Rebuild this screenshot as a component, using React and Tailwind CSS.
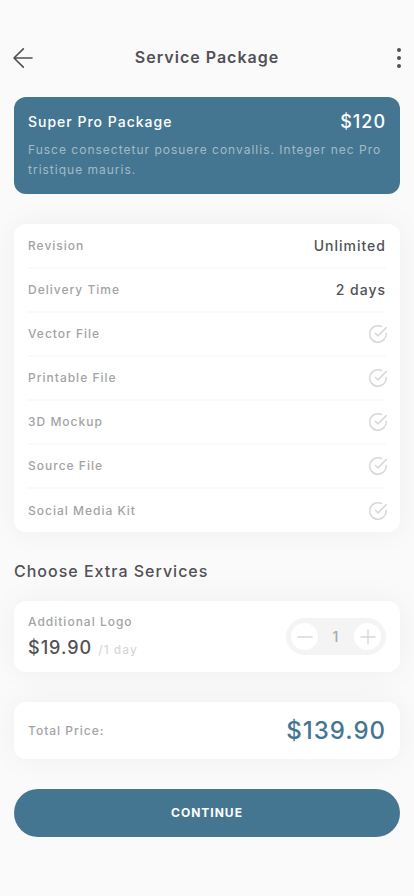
import { useState } from 'react';

const BASE_PRICE = 120;
const LOGO_PRICE = 19.9;

const features = [
  { label: 'Revision', value: 'Unlimited' },
  { label: 'Delivery Time', value: '2 days' },
  { label: 'Vector File' },
  { label: 'Printable File' },
  { label: '3D Mockup' },
  { label: 'Source File' },
  { label: 'Social Media Kit' },
];

function ArrowLeft() {
  return (
    <svg width="20" height="20" viewBox="0 0 20 20" fill="none" stroke="currentColor" strokeWidth="1.6" strokeLinecap="round" strokeLinejoin="round" aria-hidden="true">
      <path d="M19 10H1M10.3 0.9L1 10l9.3 9.1" />
    </svg>
  );
}

function Dots() {
  return (
    <svg width="4" height="20" viewBox="0 0 4 20" fill="currentColor" aria-hidden="true">
      <circle cx="2" cy="2" r="2" />
      <circle cx="2" cy="10" r="2" />
      <circle cx="2" cy="18" r="2" />
    </svg>
  );
}

function CheckCircle() {
  return (
    <svg width="18" height="18" viewBox="0 0 18 18" fill="none" stroke="currentColor" strokeWidth="1.5" strokeLinecap="round" strokeLinejoin="round" role="img" aria-label="Included">
      <path d="M17.2 8.4A8.25 8.25 0 1 1 12.4 1.5" />
      <path d="M6.4 8.3L9 10.9l8.2-8.3" />
    </svg>
  );
}

function StepButton({ label, path, onClick }) {
  return (
    <button type="button" aria-label={label} onClick={onClick} className="flex size-[27px] items-center justify-center rounded-full bg-white text-[#d8d8da]">
      <svg width="16" height="16" viewBox="0 0 16 16" fill="none" stroke="currentColor" strokeWidth="1.4" strokeLinecap="round" aria-hidden="true">
        <path d={path} />
      </svg>
    </button>
  );
}

export default function App() {
  const [quantity, setQuantity] = useState(1);
  const total = BASE_PRICE + LOGO_PRICE * quantity;

  return (
    <div className="min-h-screen bg-[#fafafa] px-3.5 pt-11 pb-14 font-['Inter',sans-serif] tracking-[1px] text-[#515156]">
      <header className="flex h-7 items-center justify-between">
        <button type="button" aria-label="Back" className="-ml-px">
          <ArrowLeft />
        </button>
        <h1 className="pb-0.5 text-base font-semibold">Service Package</h1>
        <button type="button" aria-label="More options" className="-mr-px flex w-5 justify-end">
          <Dots />
        </button>
      </header>

      <main>
        {/* Selected package */}
        <section className="mt-[25px] rounded-xl bg-[#457691] px-3.5 pt-3 pb-3.5 text-white">
          <div className="flex h-[26px] items-center justify-between">
            <h2 className="text-sm font-medium">Super Pro Package</h2>
            <span className="text-lg font-medium">$120</span>
          </div>
          <p className="mt-[5px] text-xs/5 text-[#a2bac8]">
            Fusce consectetur posuere convallis. Integer nec Pro tristique mauris.
          </p>
        </section>

        {/* What is included */}
        <dl className="mt-[30px] divide-y-2 divide-[#fafafa] rounded-xl bg-white px-3.5 pt-px shadow-[0_0_30px_rgba(0,0,0,0.05)]">
          {features.map(({ label, value }) => (
            <div key={label} className="flex h-11 items-center justify-between last:h-[43px]">
              <dt className="text-xs font-medium text-[#a3a3a5]">{label}</dt>
              {value ? (
                <dd className="text-sm font-medium">{value}</dd>
              ) : (
                <dd className="-mr-px text-[#d8d8da]">
                  <CheckCircle />
                </dd>
              )}
            </div>
          ))}
        </dl>

        <h2 className="mt-[27px] text-base font-medium">Choose Extra Services</h2>

        <section className="mt-[18px] flex h-[71px] items-center justify-between rounded-xl bg-white px-3.5 shadow-[0_0_30px_rgba(0,0,0,0.05)]">
          <div className="pt-0.5">
            <h3 className="text-xs font-medium text-[#a3a3a5]">Additional Logo</h3>
            <p className="mt-1 flex items-baseline gap-1.5">
              <span className="text-lg font-medium">$19.90</span>
              <span className="text-xs font-medium text-[#d8d8da]">/1 day</span>
            </p>
          </div>
          <div className="flex w-[100px] items-center justify-between rounded-full bg-[#f4f4f4] p-[5px]">
            <StepButton label="Remove one" path="M1 8h14" onClick={() => setQuantity((q) => Math.max(0, q - 1))} />
            <output className="text-sm font-medium text-[#a8a8ab]">{quantity}</output>
            <StepButton label="Add one" path="M1 8h14M8 1v14" onClick={() => setQuantity((q) => q + 1)} />
          </div>
        </section>

        <section className="mt-[30px] flex h-[57px] items-center justify-between rounded-xl bg-white px-3.5 shadow-[0_0_30px_rgba(0,0,0,0.05)]">
          <span className="text-xs font-medium text-[#a3a3a5]">Total Price:</span>
          <span className="text-2xl font-medium text-[#457691]">${total.toFixed(2)}</span>
        </section>

        <button type="button" className="mt-[30px] h-12 w-full rounded-full bg-[#457691] text-xs font-bold tracking-[1px] text-white">
          CONTINUE
        </button>
      </main>
    </div>
  );
}
